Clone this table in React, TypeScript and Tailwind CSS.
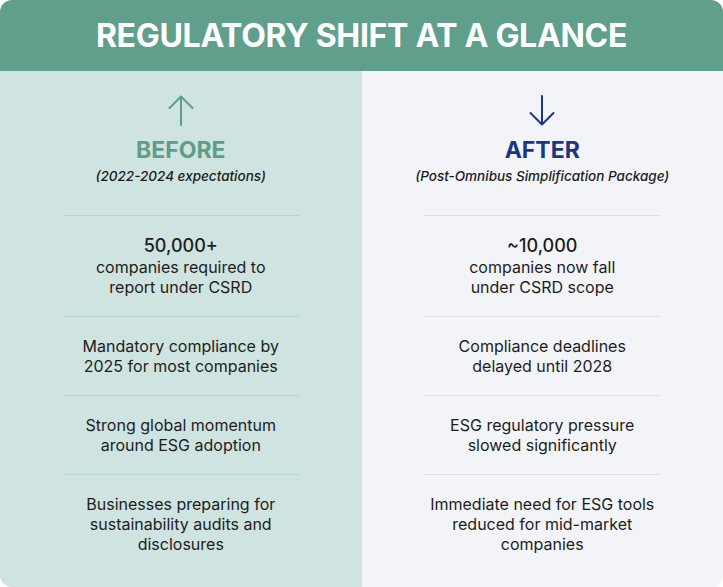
const before = [
  { head: "50,000+", lines: ["companies required to", "report under CSRD"] },
  { lines: ["Mandatory compliance by", "2025 for most companies"] },
  { lines: ["Strong global momentum", "around ESG adoption"] },
  { lines: ["Businesses preparing for", "sustainability audits and", "disclosures"] },
];

const after = [
  { head: "~10,000", lines: ["companies now fall", "under CSRD scope"] },
  { lines: ["Compliance deadlines", "delayed until 2028"] },
  { lines: ["ESG regulatory pressure", "slowed significantly"] },
  { lines: ["Immediate need for ESG tools", "reduced for mid-market", "companies"] },
];

type Item = { head?: string; lines: string[] };

function Arrow({ up, className }: { up: boolean; className: string }) {
  return (
    <svg
      width="26"
      height="31"
      viewBox="0 0 26 31"
      fill="none"
      stroke="currentColor"
      strokeWidth="2"
      strokeLinecap="round"
      strokeLinejoin="round"
      className={className}
    >
      {up ? <path d="M13 1.5V30M1.5 13L13 1.5L24.5 13" /> : <path d="M13 1V29.5M1.5 18L13 29.5L24.5 18" />}
    </svg>
  );
}

function Column({
  items,
  title,
  sub,
  up,
}: {
  items: Item[];
  title: string;
  sub: string;
  up: boolean;
}) {
  const accent = up ? "text-[#5c9e8a]" : "text-[#1c3585]";
  const line = up ? "border-[#b7d4ce]" : "border-[#dde0ea]";
  return (
    <div className={`flex-1 flex flex-col items-center pt-[24px] ${up ? "bg-[#cfe3e0]" : "bg-[#f2f4f8]"}`}>
      <Arrow up={up} className={accent} />
      <h2 className={`mt-[10px] text-[23px] font-bold leading-7 ${accent}`}>{title}</h2>
      <p className="mt-[2px] text-[13.5px] italic font-medium text-[#1b1b1b]">({sub})</p>
      <div className={`mt-[29px] w-[236px] ${line} border-t`}>
        {items.map((it, i) => (
          <div
            key={i}
            className={`py-[19px] text-center text-[16px] leading-5 text-[#1d1d1d] ${
              i < items.length - 1 ? `border-b ${line}` : ""
            }`}
          >
            {it.head && <div className="text-[18px] font-medium leading-[22px]">{it.head}</div>}
            {it.lines.map((l) => (
              <div key={l} className="whitespace-nowrap">{l}</div>
            ))}
          </div>
        ))}
      </div>
    </div>
  );
}

export default function App() {
  return (
    <div className="w-[723px] h-[587px] rounded-[12px] overflow-hidden flex flex-col font-['Inter',sans-serif]">
      <div className="h-[71px] bg-[#5f9f8c] flex items-center justify-center">
        <h1 className="text-white text-[32px] font-bold tracking-[-0.3px]">REGULATORY SHIFT AT A GLANCE</h1>
      </div>
      <div className="flex-1 flex">
        <Column items={before} title="BEFORE" sub="2022-2024 expectations" up />
        <Column items={after} title="AFTER" sub="Post-Omnibus Simplification Package" up={false} />
      </div>
    </div>
  );
}
